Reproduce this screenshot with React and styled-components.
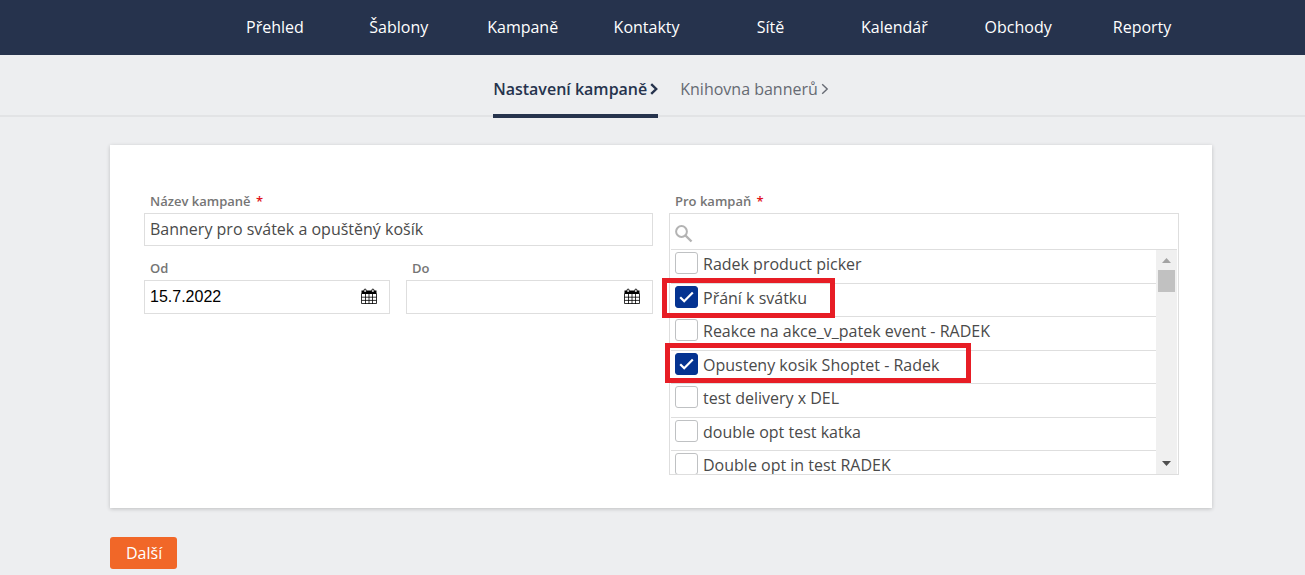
import React, { useState } from "react";
import styled, { createGlobalStyle, css } from "styled-components";

const GlobalStyle = createGlobalStyle`
  *, *::before, *::after { box-sizing: border-box; }
  body {
    margin: 0;
    background: #edeef0;
    color: #4a4a4a;
    font-family: "Open Sans", "Noto Sans", sans-serif;
    font-size: 16px;
  }
`;

const NavBar = styled.nav`
  display: grid;
  grid-template-columns: repeat(8, 1fr);
  align-items: center;
  height: 55px;
  padding: 0 101px 2px 213px;
  background: #26334d;
`;

const NavLink = styled.a`
  color: #fff;
  line-height: 24px;
  text-align: center;
  text-decoration: none;
`;

const TabBar = styled.div`
  display: flex;
  justify-content: center;
  gap: 22px;
  height: 62px;
  padding: 0 93px 0 110px;
  box-shadow: inset 0 -2px #e2e3e5;
`;

const Tab = styled.a`
  display: flex;
  align-items: center;
  gap: 3px;
  height: 63px;
  padding-top: 9px;
  border-bottom: 4px solid transparent;
  color: #666a73;
  line-height: 24px;
  text-decoration: none;
  ${(p) =>
    p.$active &&
    css`
      border-color: #26334d;
      color: #26334d;
      font-weight: 600;
    `}
`;

const Main = styled.main`
  padding: 28px 93px 6px 110px;
`;

const Card = styled.section`
  display: grid;
  grid-template-columns: 509fr 510fr;
  align-items: start;
  gap: 16px;
  padding: 47px 33px 33px 34px;
  background: #fff;
  box-shadow: 0 1px 4px rgba(0, 0, 0, 0.2);
`;

const Fields = styled.div`
  display: grid;
  grid-template-columns: 246fr 247fr;
  gap: 13px 16px;
`;

const Field = styled.div`
  grid-column: ${(p) => (p.$wide ? "1 / -1" : "auto")};
  min-width: 0;
`;

const Label = styled.label`
  display: block;
  height: 21px;
  padding-left: 6px;
  color: #757575;
  font-size: 13px;
  font-weight: 600;
  line-height: 18px;
`;

const Required = styled.span`
  margin-left: 2px;
  color: #e0131b;
`;

const InputFrame = styled.div`
  display: flex;
  align-items: center;
  height: ${(p) => (p.$icon ? "34px" : "33px")};
  padding-right: ${(p) => (p.$icon ? "12px" : "0")};
  border: 1px solid #dedede;
`;

const TextInput = styled.input`
  flex: 1;
  min-width: 0;
  height: 100%;
  padding: 0 5px 2px;
  border: 0;
  outline: 0;
  background: none;
  color: #4a4a4a;
  font: 400 16px "Open Sans", "Noto Sans", sans-serif;
`;

const DateInput = styled(TextInput)`
  padding: 0 5px;
  color: #000;
  font: 16px "Liberation Sans", Arial, sans-serif;
`;

const IconButton = styled.button`
  display: flex;
  padding: 0 0 2px;
  border: 0;
  background: none;
  color: #000;
`;

const Picker = styled.div`
  position: relative;
  height: 262px;
  padding: 0 1px;
  border: 1px solid #dedede;
`;

const SearchRow = styled.div`
  display: flex;
  align-items: center;
  height: 36px;
  padding: 4px 0 0 4px;
  border-bottom: 1px solid #dedede;
`;

const ListArea = styled.div`
  display: flex;
  height: 224px;
  overflow: hidden;
`;

const List = styled.ul`
  display: grid;
  flex: 1;
  grid-template-rows: repeat(7, 1fr);
  height: 235px;
  margin: 0;
  padding: 0;
  list-style: none;
`;

const Row = styled.li`
  border-bottom: 1px solid #dedede;
`;

const RowLabel = styled.label`
  display: flex;
  gap: 5px;
  padding: 2px 0 0 4px;
  line-height: 24px;
`;

const CheckStack = styled.span`
  display: grid;
  place-items: center;
  height: 22px;

  > * {
    grid-area: 1 / 1;
  }
`;

const CheckInput = styled.input`
  appearance: none;
  width: 23px;
  height: 22px;
  margin: 0;
  border: 1px solid #bfc1c3;
  border-radius: 3px;
  background: #fff;

  &:checked {
    border-color: #043391;
    background: #043391;
  }
`;

const CheckMark = styled.svg`
  pointer-events: none;
`;

const ScrollTrack = styled.div`
  display: flex;
  flex-direction: column;
  align-items: center;
  width: 21px;
  padding: 8px 0;
  background: #f0f0f0;
`;

const ScrollThumb = styled.div`
  width: 17px;
  height: 22px;
  margin: 7px 0 auto;
  background: #c1c1c1;
`;

const Highlight = styled.div`
  position: absolute;
  top: ${(p) => p.$top}px;
  left: ${(p) => p.$left}px;
  width: ${(p) => p.$width}px;
  height: 40px;
  border: 5px solid #e71d25;
  pointer-events: none;
`;

const NextButton = styled.button`
  height: 32px;
  margin-top: 29px;
  padding: 0 15px 0 16px;
  border: 0;
  border-radius: 3px;
  background: #f16728;
  color: #fff;
  font: 400 16px "Open Sans", "Noto Sans", sans-serif;
`;

const Chevron = ({ bold }) => (
  <svg width="8" height="12" viewBox="0 0 8 12" fill="none" stroke="currentColor" strokeWidth={bold ? 2.4 : 1.4}>
    <path d="M1.2 1.2 6.2 6 1.2 10.8" />
  </svg>
);

const CalendarIcon = () => (
  <svg width="16" height="17" viewBox="0 0 16 17">
    <path d="M0.5 2.5h15v3.5H0.5z" fill="currentColor" />
    <path
      d="M0.5 5.5v10h15V5.5M4.5 6v10M8 6v10M11.5 6v10M0.5 9.2h15M0.5 12.4h15"
      fill="none"
      stroke="currentColor"
      strokeWidth="0.8"
    />
    <path d="M3 4V2.2a1.1 1.1 0 0 1 2.2 0V4M10.8 4V2.2a1.1 1.1 0 0 1 2.2 0V4" fill="#fff" stroke="currentColor" strokeWidth="0.9" />
  </svg>
);

const SearchIcon = () => (
  <svg width="18" height="18" viewBox="0 0 18 18" fill="none" stroke="#b3b3b3" aria-hidden="true">
    <circle cx="6.5" cy="6.5" r="5.4" strokeWidth="2" />
    <path d="M10.5 10.5 16.5 16.5" strokeWidth="2.4" />
  </svg>
);

const NAV = ["Přehled", "Šablony", "Kampaně", "Kontakty", "Sítě", "Kalendář", "Obchody", "Reporty"];

const CAMPAIGNS = [
  "Radek product picker",
  "Přání k svátku",
  "Reakce na akce_v_patek event - RADEK",
  "Opusteny kosik Shoptet - Radek",
  "test delivery x DEL",
  "double opt test katka",
  "Double opt in test RADEK",
];

function CampaignRow({ name, checked, onToggle }) {
  return (
    <Row>
      <RowLabel>
        <CheckStack>
          <CheckInput type="checkbox" checked={checked} onChange={onToggle} />
          {checked && (
            <CheckMark width="15" height="12" viewBox="0 0 15 12" fill="none" stroke="#fff" strokeWidth="2.2">
              <path d="M1.2 6.2 5.2 10.2 13.8 1.4" />
            </CheckMark>
          )}
        </CheckStack>
        {name}
      </RowLabel>
    </Row>
  );
}

function DateField({ id, label, initial }) {
  return (
    <Field>
      <Label htmlFor={id}>{label}</Label>
      <InputFrame $icon>
        <DateInput id={id} type="text" defaultValue={initial} />
        <IconButton type="button" aria-label={label}>
          <CalendarIcon />
        </IconButton>
      </InputFrame>
    </Field>
  );
}

export default function App() {
  const [selected, setSelected] = useState([1, 3]);
  const toggle = (i) =>
    setSelected((s) => (s.includes(i) ? s.filter((x) => x !== i) : [...s, i]));

  return (
    <>
      <GlobalStyle />
      <NavBar>
        {NAV.map((item) => (
          <NavLink key={item} href="#">{item}</NavLink>
        ))}
      </NavBar>
      <TabBar>
        <Tab href="#" $active>
          Nastavení kampaně <Chevron bold />
        </Tab>
        <Tab href="#">
          Knihovna bannerů <Chevron />
        </Tab>
      </TabBar>
      <Main>
        <Card>
          <Fields>
            <Field $wide>
              <Label htmlFor="name">
                Název kampaně <Required>*</Required>
              </Label>
              <InputFrame>
                <TextInput id="name" type="text" defaultValue="Bannery pro svátek a opuštěný košík" />
              </InputFrame>
            </Field>
            <DateField id="from" label="Od" initial="15.7.2022" />
            <DateField id="to" label="Do" initial="" />
          </Fields>
          <Field>
            <Label htmlFor="search">
              Pro kampaň <Required>*</Required>
            </Label>
            <Picker>
              <SearchRow>
                <SearchIcon />
                <TextInput id="search" type="text" />
              </SearchRow>
              <ListArea>
                <List>
                  {CAMPAIGNS.map((name, i) => (
                    <CampaignRow
                      key={name}
                      name={name}
                      checked={selected.includes(i)}
                      onToggle={() => toggle(i)}
                    />
                  ))}
                </List>
                <ScrollTrack aria-hidden="true">
                  <svg width="9" height="5" viewBox="0 0 9 5"><path d="M0 5 4.5 0 9 5z" fill="#a3a3a3" /></svg>
                  <ScrollThumb />
                  <svg width="9" height="5" viewBox="0 0 9 5"><path d="M0 0 4.5 5 9 0z" fill="#505050" /></svg>
                </ScrollTrack>
              </ListArea>
              <Highlight $top={64} $left={-8} $width={173} />
              <Highlight $top={129} $left={-5} $width={306} />
            </Picker>
          </Field>
        </Card>
        <NextButton type="button">Další</NextButton>
      </Main>
    </>
  );
}
